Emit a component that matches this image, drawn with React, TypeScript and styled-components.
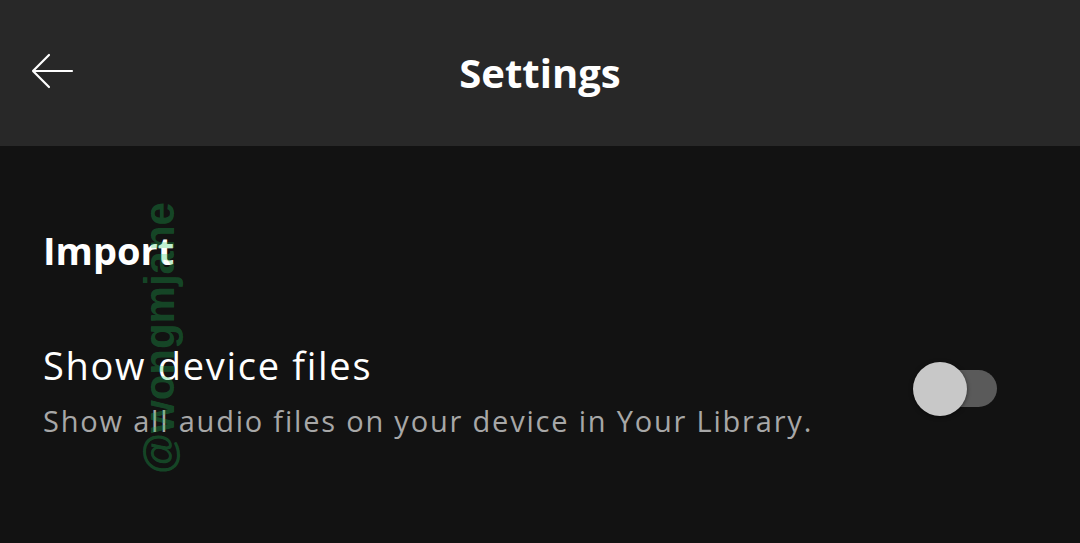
import React, { useState } from 'react';
import styled, { createGlobalStyle } from 'styled-components';

const GlobalStyle = createGlobalStyle`
  html, body {
    margin: 0;
    padding: 0;
    background: #121212;
  }
  body {
    font-family: "Open Sans", "Liberation Sans", sans-serif;
    -webkit-font-smoothing: antialiased;
  }
`;

const Root = styled.div`
  position: relative;
  width: 1080px;
  height: 543px;
  background: #121212;
  overflow: hidden;
`;

const Header = styled.header`
  position: relative;
  display: flex;
  align-items: center;
  justify-content: center;
  height: 146px;
  background: #282828;
`;

const BackButton = styled.button`
  position: absolute;
  left: 26px;
  top: 46px;
  width: 52px;
  height: 50px;
  display: flex;
  align-items: center;
  justify-content: center;
  background: none;
  border: 0;
  padding: 0;
  cursor: pointer;
`;

const Title = styled.h1`
  margin: 0;
  color: #fff;
  font-size: 40px;
  font-weight: 700;
  line-height: 48px;
`;

const Content = styled.main`
  display: flex;
  flex-direction: column;
  padding: 80px 43px 0;
`;

const SectionTitle = styled.h2`
  margin: 0;
  color: #fff;
  font-size: 38px;
  font-weight: 700;
  line-height: 48px;
`;

const Row = styled.div`
  display: flex;
  align-items: center;
  justify-content: space-between;
  margin-top: 69px;
  padding-right: 40px;
`;

const RowText = styled.div`
  display: flex;
  flex-direction: column;
`;

const RowLabel = styled.div`
  color: #fff;
  font-size: 38px;
  line-height: 44px;
  letter-spacing: 1.7px;
`;

const RowHint = styled.div`
  margin-top: 17px;
  color: #a7a7a7;
  font-size: 29px;
  line-height: 34px;
  letter-spacing: 1.8px;
`;

const Switch = styled.button<{ $on: boolean }>`
  position: relative;
  width: 84px;
  height: 54px;
  margin-top: -4px;
  background: none;
  border: 0;
  padding: 0;
  cursor: pointer;

  &::before {
    content: '';
    position: absolute;
    right: 0;
    top: 8px;
    width: 70px;
    height: 37px;
    border-radius: 19px;
    background: ${(p) => (p.$on ? '#1db954' : '#5a5a5a')};
  }

  &::after {
    content: '';
    position: absolute;
    top: 0;
    left: ${(p) => (p.$on ? '30px' : '0')};
    width: 54px;
    height: 54px;
    border-radius: 50%;
    background: ${(p) => (p.$on ? '#fff' : '#c8c8c8')};
    box-shadow: 0 1px 4px rgba(0, 0, 0, 0.5);
  }
`;

const Watermark = styled.div`
  position: absolute;
  left: 160px;
  top: 338px;
  transform: translate(-50%, -50%) rotate(-90deg);
  color: rgba(30, 200, 90, 0.3);
  font-family: "Liberation Sans", sans-serif;
  font-size: 42px;
  font-weight: 700;
  white-space: nowrap;
  pointer-events: none;
`;

const BackArrow = () => (
  <svg width="44" height="36" viewBox="0 0 44 36" fill="none">
    <path
      d="M42 18H3M19 2L3 18l16 16"
      stroke="#fff"
      strokeWidth="2.2"
      strokeLinecap="round"
      strokeLinejoin="round"
    />
  </svg>
);

export default function App() {
  const [showFiles, setShowFiles] = useState(false);

  return (
    <Root>
      <GlobalStyle />
      <Header>
        <BackButton aria-label="Back">
          <BackArrow />
        </BackButton>
        <Title>Settings</Title>
      </Header>
      <Content>
        <SectionTitle>Import</SectionTitle>
        <Row>
          <RowText>
            <RowLabel>Show device files</RowLabel>
            <RowHint>Show all audio files on your device in Your Library.</RowHint>
          </RowText>
          <Switch
            $on={showFiles}
            role="switch"
            aria-checked={showFiles}
            onClick={() => setShowFiles((v) => !v)}
          />
        </Row>
      </Content>
      <Watermark>@wongmjane</Watermark>
    </Root>
  );
}
